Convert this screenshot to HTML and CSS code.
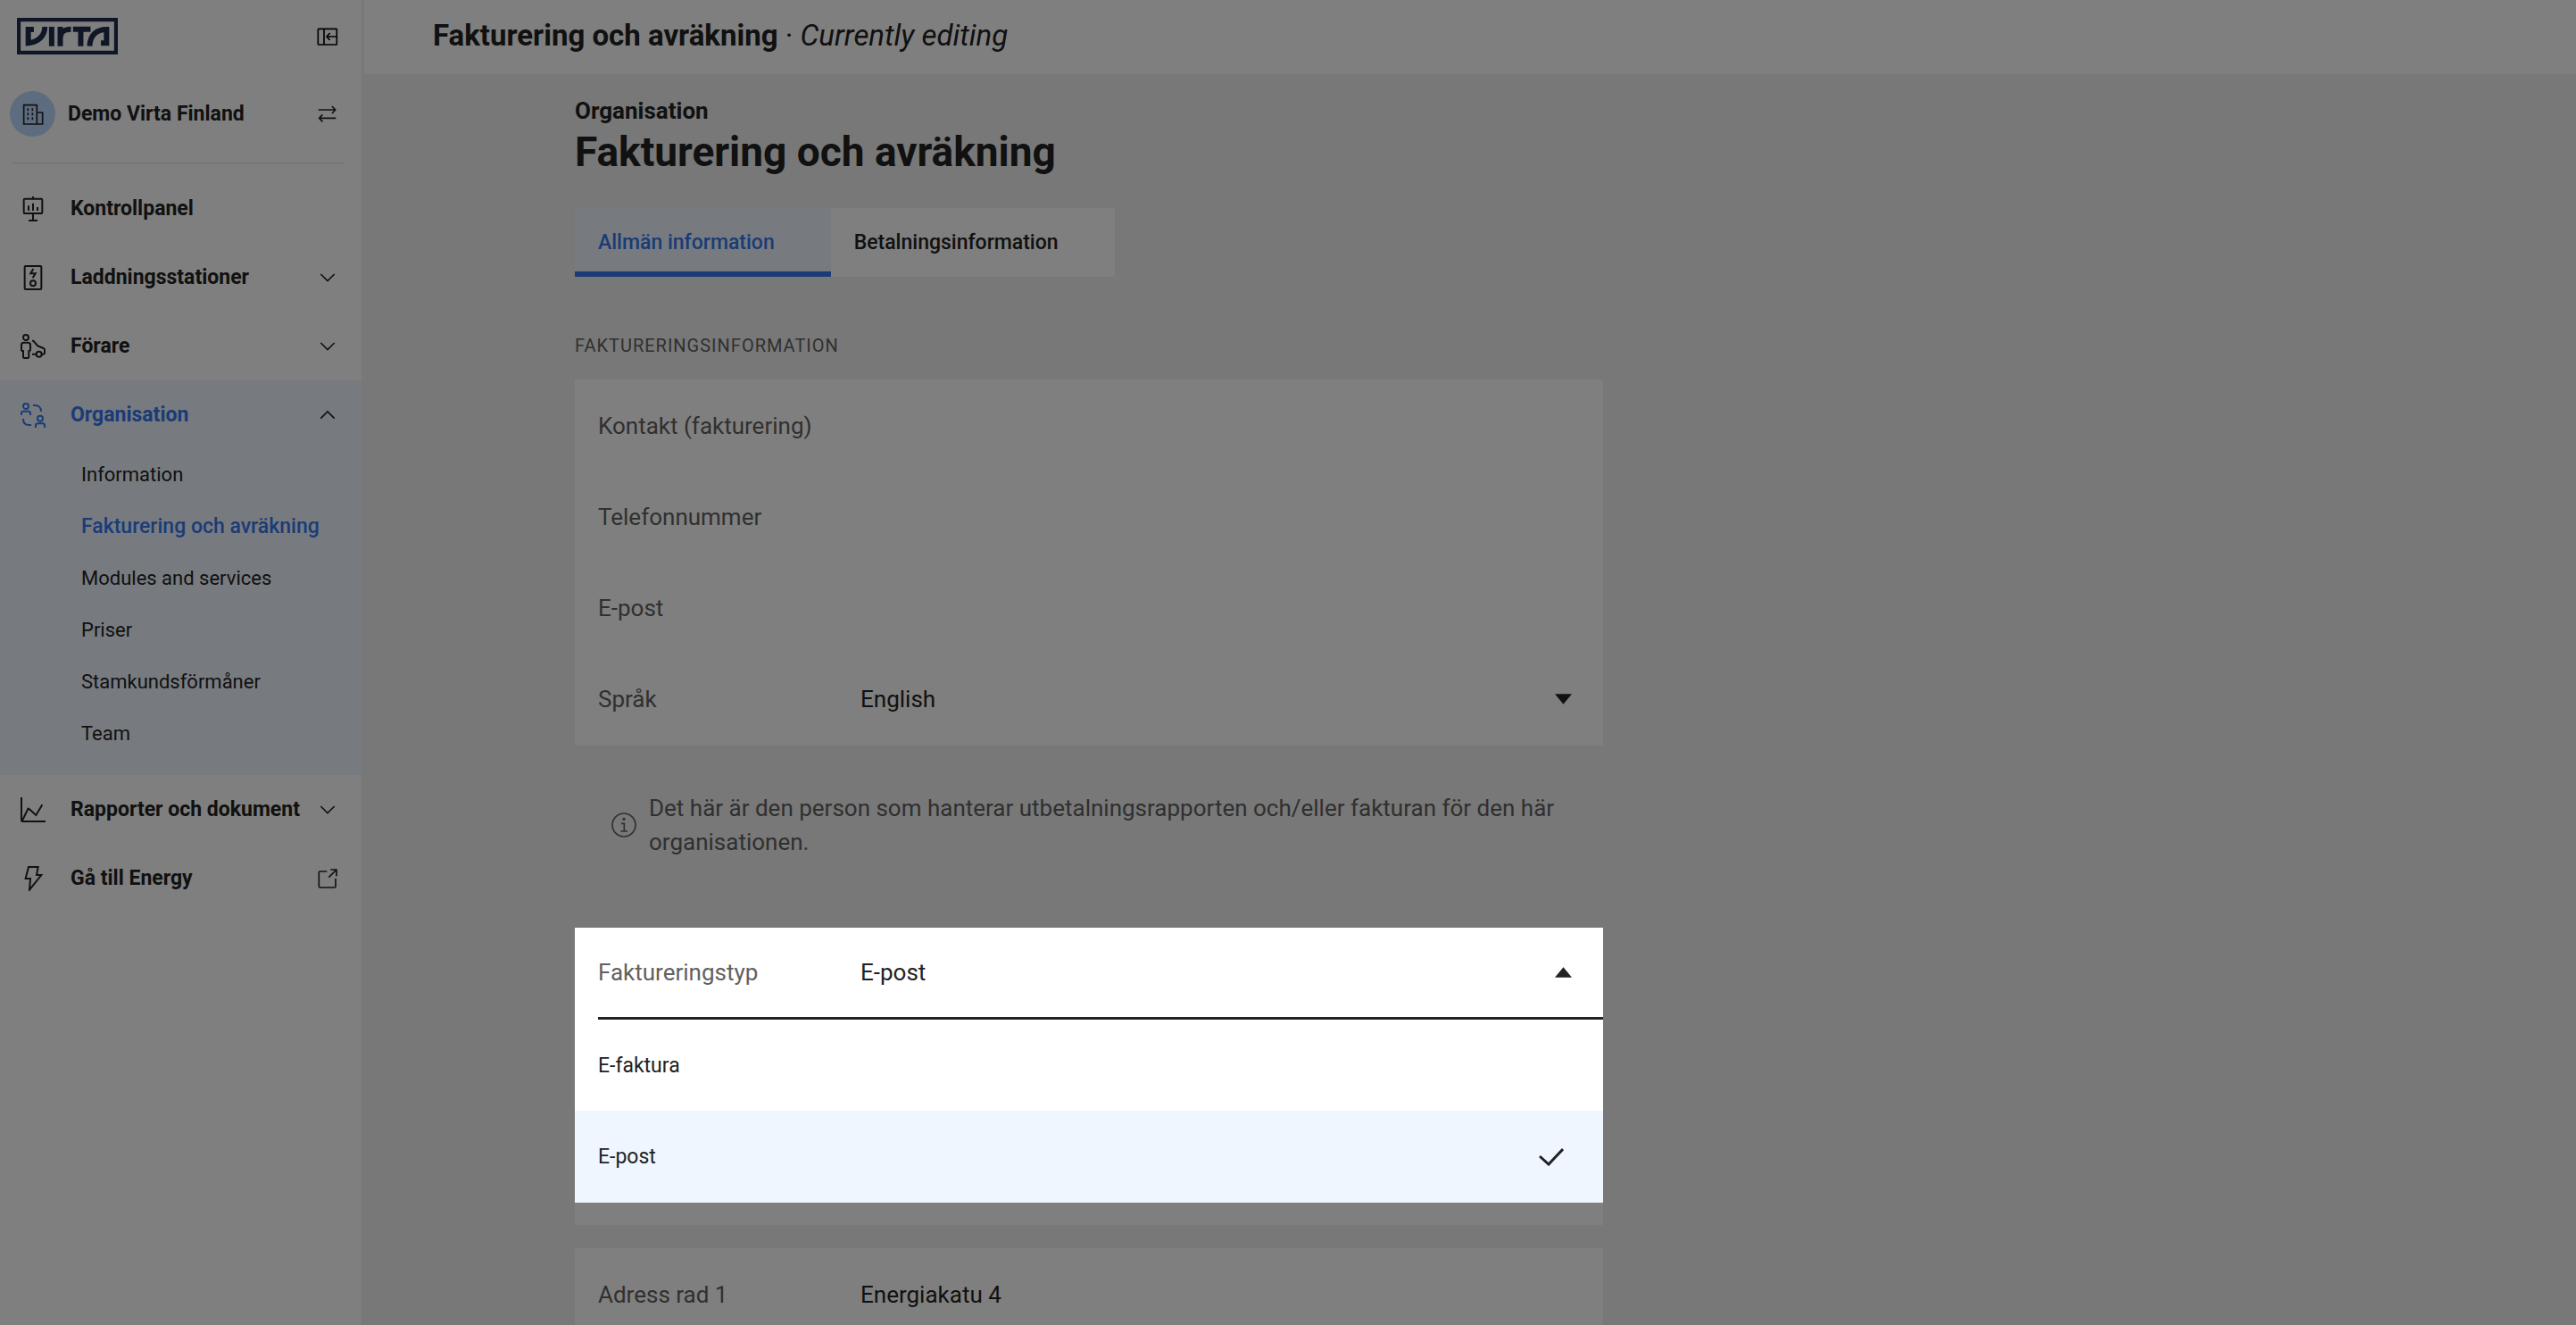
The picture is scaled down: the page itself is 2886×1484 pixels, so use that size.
FILE: index.html
```
<!DOCTYPE html>
<html lang="sv">
<head>
  <meta charset="UTF-8">
  <meta name="viewport" content="width=device-width, initial-scale=1.0">
  <title>Fakturering och avräkning</title>
  <link rel="stylesheet" href="styles.css">
</head>
<body>
  <div class="app">
    <aside class="sidebar">
      <div class="brand">
        <a href="#" class="logo" aria-label="Virta">
          <svg viewBox="0 0 340 123" fill="none" stroke="currentColor">
            <rect x="6" y="6" width="328" height="111" stroke-width="13"/>
            <path stroke-width="18" d="M57 39H38V85C70 82 94 62 94 30M117 30V95M146 95V30M146 72C146 48 158 38 182 38M189 38H248M215 38V95M245 95C247 58 268 39 302 39V85H283"/>
          </svg>
        </a>
        <button class="icon-btn" aria-label="Dölj meny">
          <svg class="icon-sm icon-black" viewBox="0 0 72 72"><rect x="4" y="10" width="63" height="53" rx="2"/><path d="M24 10V63M67 36H34M44 24L33 36L44 48"/></svg>
        </button>
      </div>

      <button class="org-switch">
        <span class="avatar">
          <svg class="icon" viewBox="0 0 84 84"><path d="M11 75V11H55V75ZM55 36H74V75H55"/><path stroke-dasharray="9 6" d="M25 22V62M40 22V62"/></svg>
        </span>
        <span class="org-name">Demo Virta Finland</span>
        <svg class="icon-sm" viewBox="0 0 72 72"><path d="M5 21H62M51 9L62 21L51 33M64 49H8M19 37L8 49L19 61"/></svg>
      </button>

      <nav class="menu">
        <a href="#" class="menu-item">
          <svg class="icon" viewBox="0 0 84 84"><rect x="11" y="8" width="62" height="49" rx="3"/><path d="M42 0V8M27 31V48M42 23V48M57 36V48M42 57V81M27 81H57"/></svg>
          <span>Kontrollpanel</span>
        </a>
        <button class="menu-item">
          <svg class="icon" viewBox="0 0 84 84"><rect x="14" y="3" width="56" height="78" rx="3"/><path d="M43 12L34 28H50L41 43"/><circle cx="42" cy="61" r="9"/></svg>
          <span>Laddningsstationer</span>
          <svg class="icon-sm" viewBox="0 0 72 72"><path d="M13 24L36 47L59 24"/></svg>
        </button>
        <button class="menu-item">
          <svg class="icon" viewBox="0 0 84 84"><circle cx="18" cy="12" r="9"/><path d="M11 29H25A8 8 0 0 1 33 37V54C33 56 31 57 28 57V77C28 80 26 81 24 81H13C11 81 9 80 9 77V57C5 57 3 56 3 54V37A8 8 0 0 1 11 29ZM39 22L44 24L58 40L77 48C80 49 81 51 81 54V64C81 67 79 68 77 68H72M39 68H53"/><circle cx="62" cy="68" r="9"/></svg>
          <span>Förare</span>
          <svg class="icon-sm" viewBox="0 0 72 72"><path d="M13 24L36 47L59 24"/></svg>
        </button>

        <div class="menu-group">
          <button class="menu-item menu-item-active" aria-expanded="true">
            <svg class="icon" viewBox="0 0 84 84"><circle cx="18" cy="12" r="9"/><path d="M3 42V36C3 31 5 29 9 29H27C31 29 33 31 33 36V42M42 9H50C60 9 69 16 69 30M9 54C9 68 16 75 28 75H36M51 84V77C51 72 54 70 58 70H75C79 70 81 72 81 77V84"/><circle cx="66" cy="53" r="9"/></svg>
            <span>Organisation</span>
            <svg class="icon-sm" viewBox="0 0 72 72"><path d="M13 47L36 24L59 47"/></svg>
          </button>
          <ul class="submenu">
            <li><a href="#">Information</a></li>
            <li><a href="#" class="current">Fakturering och avräkning</a></li>
            <li><a href="#">Modules and services</a></li>
            <li><a href="#">Priser</a></li>
            <li><a href="#">Stamkundsförmåner</a></li>
            <li><a href="#">Team</a></li>
          </ul>
        </div>

        <button class="menu-item">
          <svg class="icon" viewBox="0 0 84 84"><path d="M3 0V77C3 79 5 81 7 81H84M6 78L25 39C26 37 27 37 29 39L52 60L73 25"/></svg>
          <span>Rapporter och dokument</span>
          <svg class="icon-sm" viewBox="0 0 72 72"><path d="M13 24L36 47L59 24"/></svg>
        </button>
        <a href="#" class="menu-item">
          <svg class="icon" viewBox="0 0 84 84"><path d="M27 3H59L54 30H70L30 80L33 42H17Z"/></svg>
          <span>Gå till Energy</span>
          <svg class="icon-sm" viewBox="0 0 72 72"><path d="M34 12H10C8 12 7 13 7 15V63C7 65 8 66 10 66H60C62 66 63 65 63 63V36M40 32L66 6M46 6H66V28"/></svg>
        </a>
      </nav>
    </aside>

    <main class="main">
      <header class="topbar">
        <strong>Fakturering och avräkning</strong> · <em>Currently editing</em>
      </header>

      <div class="content">
        <p class="eyebrow">Organisation</p>
        <h1>Fakturering och avräkning</h1>

        <div class="tabs" role="tablist">
          <button class="tab tab-active" role="tab" aria-selected="true">Allmän information</button>
          <button class="tab" role="tab" aria-selected="false">Betalningsinformation</button>
        </div>

        <h2 class="section-title">Faktureringsinformation</h2>

        <div class="card">
          <div class="field">
            <label for="contact">Kontakt (fakturering)</label>
            <input type="text" id="contact">
          </div>
          <div class="field">
            <label for="phone">Telefonnummer</label>
            <input type="tel" id="phone">
          </div>
          <div class="field">
            <label for="email">E-post</label>
            <input type="email" id="email">
          </div>
          <div class="field">
            <label for="language">Språk</label>
            <select id="language">
              <option>English</option>
            </select>
            <svg class="arrow" viewBox="0 0 20 12"><path d="M0 0H20L10 12Z"/></svg>
          </div>
        </div>

        <div class="note">
          <svg class="icon" viewBox="0 0 84 84"><circle cx="42" cy="42" r="39"/><path d="M33 37H43V63M31 63H54"/><circle class="dot" cx="42" cy="22" r="5"/></svg>
          <p>Det här är den person som hanterar utbetalningsrapporten och/eller fakturan för den här organisationen.</p>
        </div>

        <div class="card card-billing">
          <div class="dropdown">
            <div class="field field-open">
              <label for="billing-type">Faktureringstyp</label>
              <select id="billing-type">
                <option>E-faktura</option>
                <option selected>E-post</option>
              </select>
              <svg class="arrow" viewBox="0 0 20 12"><path d="M0 12H20L10 0Z"/></svg>
            </div>
            <div class="options">
              <button class="option">E-faktura</button>
              <button class="option option-selected">
                E-post
                <svg class="check" viewBox="0 0 28 20"><path d="M1 9L11 18L27 1"/></svg>
              </button>
            </div>
          </div>
        </div>

        <div class="card">
          <div class="field">
            <label for="address">Adress rad 1</label>
            <input type="text" id="address" value="Energiakatu 4">
          </div>
        </div>
      </div>
    </main>
  </div>
  <div class="overlay"></div>
</body>
</html>
```
FILE: styles.css
```
:root {
  --bg-color: #f0f0f0;
  --card-color: #fff;
  --text-color: #222;
  --muted-color: #616161;
  --main-color: #3677ee;
  --active-bg: #eff6ff;
}

* {
  margin: 0;
  padding: 0;
  box-sizing: border-box;
}

body {
  background: var(--bg-color);
  color: var(--text-color);
  font-family: Roboto, sans-serif;
  font-size: 23px;
}

a {
  color: inherit;
  text-decoration: none;
}

ul {
  list-style: none;
}

button,
input,
select {
  font: inherit;
  color: inherit;
  background: none;
  border: none;
  border-radius: 0;
  outline: none;
}

button {
  text-align: left;
  cursor: pointer;
}

svg {
  display: block;
  flex-shrink: 0;
}

.app {
  display: flex;
  height: 100vh;
}

/* Dims everything except the open dropdown */
.overlay {
  position: fixed;
  inset: 0;
  background: rgba(0, 0, 0, 0.5);
  z-index: 10;
}

/* Icons */
.icon,
.icon-sm {
  width: 28px;
  height: 28px;
  fill: none;
  stroke: currentColor;
  stroke-width: 6;
}

.icon-sm {
  width: 24px;
  height: 24px;
  color: var(--text-color);
  stroke-width: 5;
}

.icon-black {
  color: #000;
}

/* Sidebar */
.sidebar {
  flex: 0 0 408px;
  background: var(--card-color);
  border-right: 3px solid var(--bg-color);
}

.brand {
  display: flex;
  justify-content: space-between;
  align-items: center;
  padding: 20px 26px 0 19px;
}

.logo {
  color: #1f2f4d;
}

.logo svg {
  width: 113px;
  height: 41px;
}

.org-switch {
  display: flex;
  align-items: center;
  gap: 14px;
  width: 100%;
  padding: 41px 26px 29px 11px;
  font-weight: 700;
}

.avatar {
  display: flex;
  align-items: center;
  justify-content: center;
  width: 51px;
  height: 51px;
  border-radius: 50%;
  background: #bcd8ff;
}

.avatar .icon {
  stroke-width: 5;
}

.org-name {
  flex: 1;
}

.menu::before {
  content: "";
  display: block;
  height: 1px;
  margin: 0 20px 12px 14px;
  background: #e0e0e0;
}

.menu-item {
  display: flex;
  align-items: center;
  gap: 28px;
  width: 100%;
  height: 77px;
  padding: 0 26px 0 23px;
  font-weight: 700;
  white-space: nowrap;
}

.menu-item span {
  flex: 1;
  min-width: 0;
}

.menu-item .icon-sm {
  margin-left: -28px;
}

.menu-group {
  background: var(--active-bg);
}

.menu-item-active {
  color: var(--main-color);
}

.submenu {
  padding: 0 0 17px 91px;
  font-size: 22px;
  line-height: 58px;
}

.submenu a {
  display: block;
}

.submenu .current {
  color: var(--main-color);
  font-size: 23px;
  font-weight: 500;
}

/* Main area */
.main {
  flex: 1;
  overflow-y: auto;
  scrollbar-width: none;
}

.topbar {
  padding: 20px 77px 23px;
  background: var(--card-color);
  font-size: 33px;
  line-height: 40px;
}

.content {
  max-width: 1388px;
  padding: 26px 0 26px 236px;
}

.eyebrow {
  font-size: 26px;
  font-weight: 700;
  line-height: 30px;
}

h1 {
  font-size: 46px;
  line-height: 62px;
}

/* Tabs */
.tabs {
  display: flex;
  margin-top: 32px;
}

.tab {
  height: 77px;
  padding: 0 63px 0 26px;
  background: var(--card-color);
  font-weight: 500;
}

.tab-active {
  background: var(--active-bg);
  box-shadow: inset 0 -6px var(--main-color);
  color: var(--main-color);
}

.section-title {
  margin: 65px 0 26px;
  color: var(--muted-color);
  font-size: 20px;
  font-weight: 400;
  line-height: 24px;
  letter-spacing: 1px;
  text-transform: uppercase;
}

/* Cards and fields */
.card {
  padding: 1px 0;
  background: var(--card-color);
  font-size: 26px;
}

.field {
  display: flex;
  align-items: center;
  height: 102px;
  margin-left: 26px;
  padding-right: 35px;
}

.field label {
  width: 294px;
  color: var(--muted-color);
}

.field input,
.field select {
  flex: 1;
  min-width: 0;
  height: 60px;
  appearance: none;
}

.arrow {
  width: 19px;
  height: 12px;
  fill: var(--text-color);
}

.note {
  display: flex;
  align-items: center;
  gap: 14px;
  margin: 51px 0 77px;
  padding-left: 41px;
  color: var(--muted-color);
  font-size: 26px;
  line-height: 38px;
}

.note .icon {
  stroke-width: 5;
}

.note .dot {
  fill: currentColor;
  stroke: none;
}

.card-billing {
  margin-bottom: 26px;
  padding: 0 0 25px;
}

/* Open dropdown, lifted over the overlay */
.dropdown {
  position: relative;
  background: var(--card-color);
  z-index: 11;
}

.field-open {
  height: 103px;
  border-bottom: 3px solid var(--text-color);
}

.option {
  display: flex;
  align-items: center;
  justify-content: space-between;
  width: 100%;
  height: 102px;
  padding: 0 44px 0 26px;
  font-size: 23px;
}

.option-selected {
  height: 103px;
  background: var(--active-bg);
}

.check {
  width: 28px;
  height: 20px;
  fill: none;
  stroke: var(--text-color);
  stroke-width: 3;
}
```
